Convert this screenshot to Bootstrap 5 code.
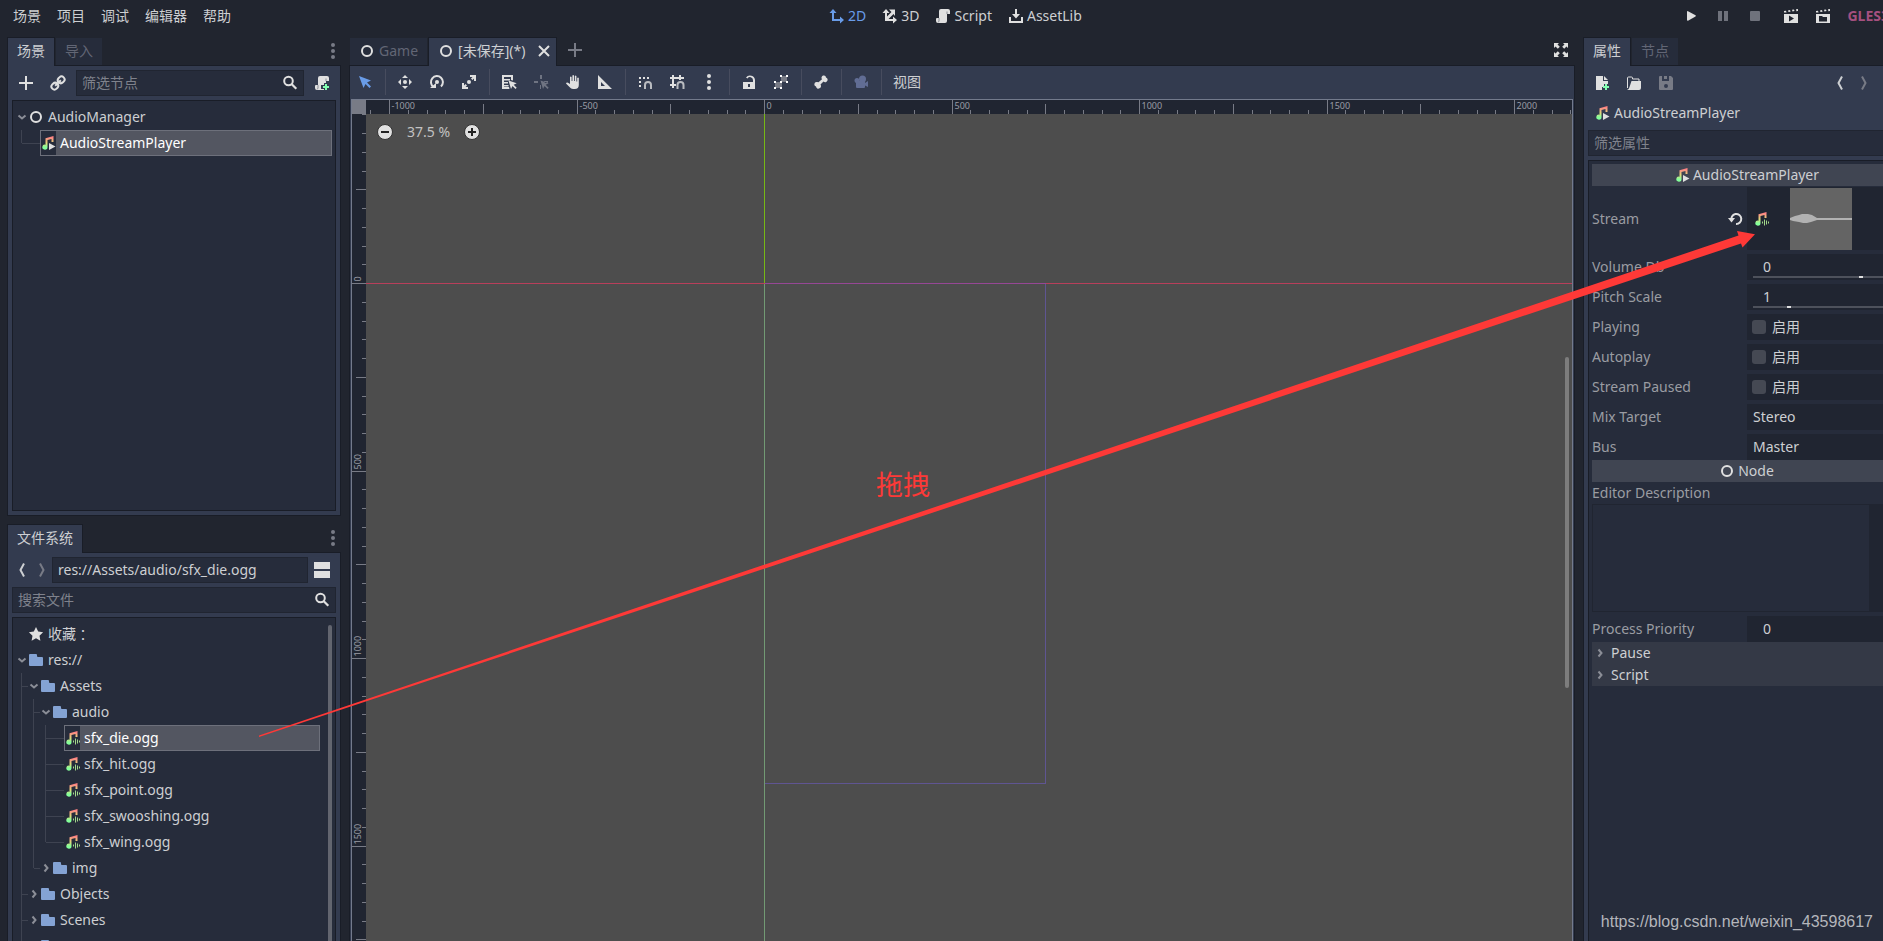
<!DOCTYPE html>
<html lang="zh-CN">
<head>
<meta charset="utf-8">
<meta name="viewport" content="width=device-width, initial-scale=1">
<title>AudioManager</title>
<link rel="stylesheet" href="https://cdn.jsdelivr.net/npm/bootstrap@5.3.0/dist/css/bootstrap.min.css">
<style>
:root{--base:#333b4f;--dark1:#262c3b;--dark2:#202531;--edge:#191d27;--txt:#cdcfd2;--dim:#9a9ca2;--icon:#e0e0e0;--accent:#699ce8}
html,body{height:100%;overflow:hidden}
body{background:#21252f;color:var(--txt);font:14px/20px "Noto Sans","Noto Sans CJK SC",sans-serif}
svg{display:block;flex:none}
button,input,select,textarea{font:inherit;color:inherit;border:0;background:none;padding:0;margin:0;border-radius:0;outline:0}
a{color:inherit;text-decoration:none}
ul{list-style:none;margin:0;padding:0}
/* the editor window reaches a little past the right and bottom of the page */
.editor{width:calc(100% + 36px);height:calc(100vh + 54px)}
.topbar{height:37px;padding:0 5px 5px}
.topbar button{height:32px;padding:0 8px}
.modes{position:absolute;left:821px;top:0}
.modes button{display:flex;align-items:center;gap:3px}
.runbar{padding-right:25px}
.runbar button{width:32px;padding:0;display:grid;place-items:center}
.renderer{color:#a5507f;font-weight:700}
.workspace{padding:0 7px;gap:8px;min-height:0}
.dock-left{width:334px;gap:8px}
.dock-right{width:329px}
.half{flex:0 0 50%;margin-bottom:0}
.tabs{height:28px}
.tab-item{height:29px;border:1px solid transparent;border-bottom:0;padding:0 9px 2px;color:#626675;background:var(--dark1);background-clip:padding-box;gap:4px;display:flex;align-items:center;white-space:nowrap;flex:none}
.tab-item:not(.on){height:28px}
.tab-item.on{background:var(--base);border-color:var(--edge);color:var(--txt);position:relative;z-index:1}
.tab-item.scene{min-width:79px}
.tab-item.closable{padding-right:5px}
.pane{background:var(--base);border:1px solid var(--edge);padding:4px;gap:4px;min-height:0}
.tool{width:28px;height:26px;display:grid;place-items:center;flex:none}
.tool.slim{width:20px}
.field{height:26px;background:var(--dark1);border:1px solid var(--dark2)}
.field input{flex:1;min-width:0;padding-left:5px}
.field svg{margin-right:5px}
input::placeholder{color:#7f828c;opacity:1}
.treebox{background:var(--dark1);border:1px solid var(--edge);padding:3px;min-height:0;overflow:hidden;position:relative}
.node{height:26px;display:flex;align-items:center}
.twist{width:13px;display:flex;align-items:center}
.node .pic{margin:0 4px 0 -1px}
.tree li{position:relative;padding-left:0}
.tree ul{padding-left:12px}
.tree ul>li::before{content:"";position:absolute;left:-7px;top:0;height:100%;border-left:1px solid #3e4351}
.tree ul>li:last-child::before{height:13px}
.tree ul>li::after{content:"";position:absolute;left:-6px;top:13px;width:6px;border-top:1px solid #3e4351}
.tree ul>li.leaf::after{width:18px}
.body{display:flex;align-items:center;flex:1;height:26px;border:1px solid transparent;margin-left:-1px}
.chosen .body{background:#535661;border-color:#6d707b;color:#fff}
.chosen .pic{background:var(--dark1);box-shadow:0 4px var(--dark1),0 -4px var(--dark1);clip-path:inset(-4px 0 -4px 1px)}
.wide-colon{font-family:"Noto Sans CJK TC",sans-serif}
.files{padding-right:15px}
.vbar{position:absolute;width:4px;border-radius:2px;background:#62656f}
.toolbar{height:33px;padding-left:1px}
.toolbar .tool{margin-right:4px;height:32px}
.toolbar .view-menu{height:32px;padding:0 6px}
.split{width:1px;height:26px;background:#474c5e;margin:3px 5px 0 2px}
.stage{margin:0 1px;border:1px solid #737a8c;border-bottom:0;display:grid;grid-template:14px 1fr/14px 1fr;min-height:0;overflow:hidden}
.corner{background:#787b86;margin:-1px 0 0 -1px}
.ruler{background:var(--dark2)}
.ruler text{font-size:9px;fill:#9a9ca5}
.ruler line{stroke:#787b86;shape-rendering:crispEdges}
.world{background:#4d4d4d;position:relative;overflow:hidden}
.zoombar{position:absolute;left:11px;top:8px;gap:14px;color:#c2c2c2}
.drag-note{position:absolute;left:510px;top:350px;font-size:27px;line-height:40px;color:#fe3937;font-family:"Noto Sans CJK SC",sans-serif}
.cat{height:22px;background:#404552;gap:3px;padding-right:2px}
.prop{display:flex;min-height:26px;margin-bottom:4px}
.prop>.name{flex:1;color:var(--dim);display:flex;align-items:center}
.prop>.val{width:156px;background:var(--dark2);position:relative;display:flex;align-items:center}
.prop.preview{height:64px;padding-top:1px}
.preview .val svg:first-child{margin:0 21px 0 6px}
.val .num{width:100%;padding:0 0 2px 16px;height:26px}
.val select{appearance:none;width:100%;padding-left:6px;height:26px}
.val input[type=range]{appearance:none;-webkit-appearance:none;position:absolute;left:6px;bottom:2px;width:142px;height:2px;background:#4d515b}
.val input[type=range]::-webkit-slider-thumb{-webkit-appearance:none;width:4px;height:2px;background:#e0e0e0}
.val input[type=checkbox]{appearance:none;width:14px;height:14px;border-radius:3px;background:#454953;margin:0 6px 0 5px}
.desc-name{height:22px;line-height:22px;color:var(--dim)}
.desc{height:108px;background:var(--dark2);border:1px solid var(--dark2)}
.desc textarea{background:var(--dark1);width:276px;resize:none}
.group{height:22px;background:#343946;width:100%;gap:5px;padding-left:2px}
.arrow{position:absolute;left:0;top:0;pointer-events:none;z-index:5}
.watermark{position:absolute;right:10px;bottom:8px;z-index:6;font:16px/22px "Liberation Sans",sans-serif;color:#b4b6bb}
</style>
</head>
<body>
<svg width="0" height="0" class="position-absolute" aria-hidden="true">
<defs>
<linearGradient id="mg" x1="0" y1="1" x2="0" y2="15" gradientUnits="userSpaceOnUse"><stop offset=".1" stop-color="#ff8484"/><stop offset=".5" stop-color="#e1d97a"/><stop offset=".8" stop-color="#84ff9a"/></linearGradient>
<symbol id="ring" viewBox="0 0 16 16"><circle cx="8" cy="8" r="5" fill="none" stroke="#e0e0e0" stroke-width="2"/></symbol>
<symbol id="note" viewBox="0 0 16 16"><path d="M5.500 3.200 13.500 1v6h-2V3.900l-4 1.100v7a2.600 2.500 0 1 1-2-2.300z" fill="url(#mg)"/></symbol>
<symbol id="player" viewBox="0 0 16 16"><use href="#note"/><path d="M9 8v7l6.500-3.500z" fill="#e0e0e0"/></symbol>
<symbol id="ogg" viewBox="0 0 16 16"><use href="#note"/><path d="M9.500 10.500v2M11.500 8.500v6M13.500 9.500v4M15.500 10.500v2" stroke="#a3d98a"/></symbol>
<symbol id="folder" viewBox="0 0 16 16"><path d="M2 2a1 1 0 0 0-1 1v10a1 1 0 0 0 1 1h12a1 1 0 0 0 1-1V6a1 1 0 0 0-1-1h-4a1 1 0 0 1-1-1V3a1 1 0 0 0-1-1z" fill="#84a3d4"/></symbol>
<symbol id="down" viewBox="0 0 12 12"><path d="m2.500 4.500 3.500 3 3.500-3" fill="none" stroke="#8b8e97" stroke-width="2"/></symbol>
<symbol id="right" viewBox="0 0 12 12"><path d="m4.500 2.500 3 3.500-3 3.500" fill="none" stroke="#8b8e97" stroke-width="2"/></symbol>
<symbol id="dots" viewBox="0 0 16 16"><circle cx="8" cy="2" r="2"/><circle cx="8" cy="8" r="2"/><circle cx="8" cy="14" r="2"/></symbol>
<symbol id="plus" viewBox="0 0 16 16"><path d="M7 1h2v6h6v2H9v6H7V9H1V7h6z"/></symbol>
<symbol id="search" viewBox="0 0 16 16"><circle cx="6.500" cy="6" r="4.300" fill="none" stroke="#e0e0e0" stroke-width="2"/><path d="m9.500 9 4.800 4.800" stroke="#e0e0e0" stroke-width="2.200"/></symbol>
<symbol id="script" viewBox="0 0 16 16"><path d="M6 1a2 2 0 0 0-2 2v7H2a1 1 0 0 0-1 1v2a2 2 0 0 0 2 2h7a2 2 0 0 0 2-2V6h3V3a2 2 0 0 0-2-2z"/><path d="M4 10v3a1 1 0 0 1-1 1M12 3.500V6" stroke="#8b8e97" fill="none"/></symbol>
<symbol id="back" viewBox="0 0 16 16"><path d="M10 1.500 6.500 8l3.500 6.500" fill="none" stroke="currentColor" stroke-width="2"/></symbol>
<symbol id="fwd" viewBox="0 0 16 16"><path d="M6 1.500 9.500 8 6 14.500" fill="none" stroke="currentColor" stroke-width="2"/></symbol>
<symbol id="expand" viewBox="0 0 16 16"><path d="M1 1h5L4.500 2.500l2.300 2.300-2 2-2.300-2.300L1 6zM15 1v5l-1.500-1.500-2.300 2.300-2-2 2.300-2.300L10 1zM1 15v-5l1.500 1.500 2.300-2.300 2 2-2.300 2.300L6 15zM15 15h-5l1.500-1.500-2.300-2.300 2-2 2.300 2.300L15 10z"/></symbol>
</defs>
</svg>

<div class="editor d-flex flex-column">
<header class="topbar d-flex align-items-center justify-content-between">
  <nav class="d-flex" aria-label="菜单"><button>场景</button><button>项目</button><button>调试</button><button>编辑器</button><button>帮助</button></nav>
  <div class="modes d-flex">
    <button style="color:var(--accent)"><svg width="16" height="16" fill="#699ce8"><path d="m4 1-3.500 4H3v8h8v2.500l4-3.500-4-3.500V11H5V5h2.500z"/></svg>2D</button>
    <button><svg width="16" height="16" fill="#e0e0e0"><path d="M4 1 .5 5H3v8h8v2.500l4-3.500-4-3.500V11H6.500l5-5L13 8V1.500H7L9.500 4 5 8.500V5h2.500z"/></svg>3D</button>
    <button><svg width="16" height="16" fill="#e0e0e0"><use href="#script"/></svg>Script</button>
    <button><svg width="16" height="16" fill="#e0e0e0"><path d="M7 1h2v5h3l-4 4.500L4 6h3zM1 9h2v4h10V9h2v6H1z"/></svg>AssetLib</button>
  </div>
  <div class="runbar d-flex align-items-center">
    <button aria-label="运行"><svg width="16" height="16" fill="#e0e0e0"><path d="M4 3.800q0-1 1-.6l7.500 4q.8.600 0 1.200l-7.500 4.400q-1 .2-1-.8z"/></svg></button>
    <button aria-label="暂停"><svg width="16" height="16" fill="#6f727c"><path d="M3 3h4v10H3zM9 3h4v10H9z"/></svg></button>
    <button aria-label="停止"><svg width="16" height="16" fill="#6f727c"><rect x="3" y="3" width="10" height="10" rx="1"/></svg></button>
    <button class="ms-1" aria-label="运行场景"><svg width="16" height="16" fill="#e0e0e0"><path d="m1 3 2-.3.5 1.800H1zM5 2.400l2-.3.5 1.600-2 .3zM9 1.800l2-.3.5 1.600-2 .3zM13 1.200l2-.2v2l-1.600.3zM1 6h14v9H1zm5 1.500v6L11 10.500z" fill-rule="evenodd"/></svg></button>
    <button aria-label="运行指定场景"><svg width="16" height="16" fill="#e0e0e0"><path d="m1 3 2-.3.5 1.800H1zM5 2.400l2-.3.5 1.600-2 .3zM9 1.800l2-.3.5 1.600-2 .3zM13 1.200l2-.2v2l-1.600.3zM1 6h14v9H1zm3 2v5.500h8V9H8L7 8z" fill-rule="evenodd"/></svg></button>
    <span class="renderer ps-2">GLES3</span>
  </div>
</header>

<main class="workspace d-flex flex-grow-1">
<aside class="dock-left d-flex flex-column flex-shrink-0">
  <section class="half d-flex flex-column">
    <div class="tabs d-flex"><button class="tab-item on">场景</button><button class="tab-item">导入</button>
      <button class="ms-auto" aria-label="选项"><svg width="16" height="16" fill="#787b86"><use href="#dots"/></svg></button></div>
    <div class="pane d-flex flex-column flex-grow-1">
      <div class="d-flex gap-1">
        <button class="tool" aria-label="添加"><svg width="16" height="16" fill="#e0e0e0"><use href="#plus"/></svg></button>
        <button class="tool" aria-label="实例"><svg width="16" height="16" fill="none" stroke="#e0e0e0" stroke-width="2"><g transform="rotate(-45 8 8)"><rect x="0" y="5" width="7" height="6" rx="3"/><rect x="9" y="5" width="7" height="6" rx="3"/><path d="M4 8h8"/></g></svg></button>
        <label class="field d-flex align-items-center flex-grow-1"><input type="text" placeholder="筛选节点"><svg width="16" height="16"><use href="#search"/></svg></label>
        <button class="tool" aria-label="附加脚本"><svg width="16" height="16" fill="#e0e0e0"><use href="#script"/><path d="M10 8h3v2h3v4h-3v2h-3v-2H7v-4h3z" fill="#333b4f"/><path d="M11 9h2v2h2v2h-2v2h-2v-2H9v-2h2z" fill="#84ffb1"/></svg></button>
      </div>
      <div class="treebox flex-grow-1"><ul class="tree">
        <li><div class="node"><span class="twist"><svg width="12" height="12"><use href="#down"/></svg></span><span class="body"><svg class="pic" width="16" height="16"><use href="#ring"/></svg>AudioManager</span></div>
          <ul><li class="leaf"><div class="node chosen"><span class="twist"></span><span class="body"><svg class="pic" width="16" height="16"><use href="#player"/></svg>AudioStreamPlayer</span></div></li></ul></li>
      </ul></div>
    </div>
  </section>
  <section class="d-flex flex-column flex-grow-1" style="min-height:0">
    <div class="tabs d-flex"><button class="tab-item on">文件系统</button>
      <button class="ms-auto" aria-label="选项"><svg width="16" height="16" fill="#787b86"><use href="#dots"/></svg></button></div>
    <div class="pane d-flex flex-column flex-grow-1">
      <div class="d-flex">
        <button class="tool slim" aria-label="后退"><svg width="16" height="16"><use href="#back"/></svg></button>
        <button class="tool slim" aria-label="前进" style="color:#787b86"><svg width="16" height="16"><use href="#fwd"/></svg></button>
        <label class="field d-flex align-items-center flex-grow-1"><input type="text" value="res://Assets/audio/sfx_die.ogg" aria-label="路径"></label>
        <button class="tool" aria-label="拆分"><svg width="16" height="16" fill="#e0e0e0"><path d="M0 0h16v7H0zM0 9h16v7H0z"/></svg></button>
      </div>
      <label class="field d-flex align-items-center"><input type="text" placeholder="搜索文件"><svg width="16" height="16"><use href="#search"/></svg></label>
      <div class="treebox files flex-grow-1"><ul class="tree" id="files"></ul><div class="vbar" style="right:3px;top:7px;bottom:0"></div></div>
    </div>
  </section>
</aside>

<section class="d-flex flex-column flex-grow-1" style="min-width:0">
  <div class="tabs d-flex align-items-start">
    <button class="tab-item scene"><svg width="16" height="16"><use href="#ring"/></svg>Game</button>
    <div class="tab-item on closable"><svg width="16" height="16"><use href="#ring"/></svg><span>[未保存](*)</span><button class="ms-1 ps-1" aria-label="关闭"><svg width="14" height="16" stroke="#e0e0e0" stroke-width="2"><path d="m2 3 10 10M12 3 2 13"/></svg></button></div>
    <button class="tool ms-1" aria-label="新建场景"><svg width="16" height="16" fill="#787b86"><use href="#plus"/></svg></button>
    <button class="tool ms-auto" aria-label="全屏"><svg width="16" height="16" fill="#e0e0e0"><use href="#expand"/></svg></button>
  </div>
  <div class="pane p-0 gap-0 d-flex flex-column flex-grow-1">
    <div class="toolbar d-flex align-items-start">
      <button class="tool" aria-label="选择"><svg width="16" height="16" fill="#699ce8"><path d="M2 2l4.500 12 2-4 4 4 1.500-1.500-4-4 4-2z"/></svg></button><i class="split"></i>
      <button class="tool" aria-label="移动"><svg width="16" height="16" fill="#e0e0e0"><path d="m8 1 3 3H5zM8 15l3-3H5zM1 8l3-3v6zM15 8l-3-3v6z"/><circle cx="8" cy="8" r="2"/></svg></button>
      <button class="tool" aria-label="旋转"><svg width="16" height="16" fill="#e0e0e0"><path d="M4.500 13A6 6 0 1 1 12 12.500" fill="none" stroke="#e0e0e0" stroke-width="2"/><path d="M1 14h6V9z"/><circle cx="8" cy="8" r="2"/></svg></button>
      <button class="tool" aria-label="缩放"><svg width="16" height="16" fill="#e0e0e0"><path d="M9 1h6v6h-2V4.500L11.500 6 10 4.500 11.500 3H9zM1 9h2v2.500L4.500 10 6 11.500 4.500 13H7v2H1z"/><circle cx="8" cy="8" r="2"/></svg></button><i class="split"></i>
      <button class="tool" aria-label="列表选择"><svg width="16" height="16" fill="#e0e0e0"><path d="M1 1h11v5.500L10 6V3H3v2h6v1.500H3V8h4v1.500H3V11h4.500v1.500H3v.5h5l.5 2H1z"/><path d="m7.500 6.500 2.500 8.500 1.500-3 3 3 1.200-1.200-3-3 3-1.500z"/></svg></button>
      <button class="tool" aria-label="轴心"><svg width="16" height="16" fill="#6f7482"><path d="M7 1h2v4H7zM1 7h4v2H1zM11 7h4v2h-3zM7 11h1v4H7zM7.500 6.500l2.500 8.500 1.500-3 3 3 1.200-1.200-3-3 3-1.500z"/></svg></button>
      <button class="tool" aria-label="平移"><svg width="16" height="16" fill="#e0e0e0"><path d="M5 3q.8-1 1.600 0v4h.8V1.500q.8-1 1.600 0V7h.8V2q.8-1 1.600 0v5.500h.8V4q.8-1 1.600 0v7q0 4-4 4H8q-2 0-3.500-2L1 9.500q.5-1.500 2-.7l2 1.200z"/></svg></button>
      <button class="tool" aria-label="标尺"><svg width="16" height="16" fill="#e0e0e0"><path d="M1 1v14h14zm3 7 4 4H4z" fill-rule="evenodd"/></svg></button><i class="split"></i>
      <button class="tool" aria-label="智能吸附"><svg width="16" height="16" fill="#e0e0e0"><path d="M2 3h2v2H2zM2 7h2v2H2zM2 11h2v2H2zM6 3h2v2H6zM10 3h2v2h-2z"/><path d="M8 15v-4a3 3 0 0 1 6 0v4" fill="none" stroke="#b9bbc0" stroke-width="2"/></svg></button>
      <button class="tool" aria-label="网格吸附"><svg width="16" height="16" fill="#e0e0e0"><path d="M3 1h2v13H3zM10 1h2v5h-2zM1 3h14v2H1zM1 10h6v2H1z"/><path d="M8.500 15v-4a3 3 0 0 1 6 0v4" fill="none" stroke="#b9bbc0" stroke-width="2"/></svg></button>
      <button class="tool" aria-label="吸附选项"><svg width="16" height="16" fill="#e0e0e0"><use href="#dots"/></svg></button><i class="split"></i>
      <button class="tool" aria-label="锁定"><svg width="16" height="16" fill="#e0e0e0"><path d="M2 8h10V6a3 3 0 0 0-5.500-1.500L5 3.500A5 5 0 0 1 14 6v9H2zm5 2v3h2v-3z" fill-rule="evenodd"/></svg></button>
      <button class="tool" aria-label="分组"><svg width="16" height="16" fill="#fff"><path d="M8 2h6v6H8zM2 8h7v6H2z" fill="#787b86"/><path d="M7 1h2v2H7zM13 1h2v2h-2zM13 7h2v2h-2zM1 7h2v2H1zM7 7h2v2H7zM1 13h2v2H1zM7 13h2v2H7z"/></svg></button><i class="split"></i>
      <button class="tool" aria-label="骨骼"><svg width="16" height="16" fill="#e0e0e0"><path d="M10 1.500a2.300 2.300 0 0 1 3 2 2.300 2.300 0 0 1 .5 4.200 2.300 2.300 0 0 1-3-.2L7.500 10.500a2.500 2.500 0 0 1-1 3.800 2.300 2.300 0 0 1-3.500-1.800 2.300 2.300 0 0 1 .5-4.500 2.500 2.500 0 0 1 2 .3L9 5.300a2.500 2.500 0 0 1 1-3.800z"/></svg></button><i class="split"></i>
      <button class="tool" aria-label="摄像机"><svg width="16" height="16" fill="#616d94"><circle cx="9.500" cy="5" r="3.500"/><circle cx="4" cy="6.500" r="2.500"/><path d="M3 7h9v2l3-2v6l-3-1.500V13q0 1-1 1H4q-1 0-1-1z"/></svg></button><i class="split"></i>
      <button class="view-menu">视图</button>
    </div>
    <div class="stage flex-grow-1">
      <div class="corner"></div>
      <svg class="ruler" id="rulerX" width="100%" height="14"></svg>
      <svg class="ruler" id="rulerY" width="14" height="100%"></svg>
      <div class="world">
        <svg class="position-absolute top-0 start-0" width="100%" height="100%" shape-rendering="crispEdges">
          <path d="M398.500 0v169" stroke="#76b814"/><path d="M398.500 170v900" stroke="#729a74"/>
          <line x1="0" x2="100%" y1="169.500" y2="169.500" stroke="#b83f5b"/>
          <path d="M399 169.500h281" stroke="#964795"/><path d="M679.500 170v500M399 669.500h281" stroke="#5f5592"/>
        </svg>
        <div class="zoombar d-flex align-items-center">
          <button aria-label="缩小"><svg width="16" height="16"><circle cx="8" cy="8" r="7.500" fill="#e0e0e0" stroke="#333"/><path d="M4 7h8v2H4z" fill="#222"/></svg></button>
          <span>37.5 %</span>
          <button aria-label="放大"><svg width="16" height="16"><circle cx="8" cy="8" r="7.500" fill="#e0e0e0" stroke="#333"/><path d="M4 7h3V4h2v3h3v2H9v3H7V9H4z" fill="#222"/></svg></button>
        </div>
        <div class="drag-note">拖拽</div>
        <div class="vbar" style="right:3px;top:243px;height:331px;background:#7d7d7d"></div>
      </div>
    </div>
  </div>
</section>

<aside class="dock-right d-flex flex-column flex-shrink-0">
  <div class="tabs d-flex"><button class="tab-item on">属性</button><button class="tab-item">节点</button></div>
  <div class="pane d-flex flex-column flex-grow-1">
    <div class="d-flex gap-1">
      <button class="tool" aria-label="新建资源"><svg width="16" height="16" fill="#e0e0e0"><path d="M2 1h7v5h5v3h-4v3H8v3H2z"/><path d="M10 1l4 4h-4z"/><path d="M11 9h2v2h2v2h-2v2h-2v-2H9v-2h2z" fill="#84ffb1"/></svg></button>
      <button class="tool" aria-label="打开"><svg width="16" height="16" fill="#e0e0e0"><path d="M1.500 13V3q0-1 1-1h3q1 0 1 1v1H13v2" fill="none" stroke="#e0e0e0"/><path d="M5.500 6H15v7q0 2-2 2H1q2-.5 2.500-3z"/></svg></button>
      <button class="tool" aria-label="保存"><svg width="16" height="16" fill="#787b86"><path d="M2 1h2v5h7V1h2l2 2v11q0 1-1 1H2q-1 0-1-1V2q0-1 1-1zm4 0h3v3H6zm2 8a2 2 0 1 0 0 4 2 2 0 0 0 0-4z" fill-rule="evenodd"/></svg></button>
      <button class="tool slim ms-auto" aria-label="后退"><svg width="16" height="16"><use href="#back"/></svg></button>
      <button class="tool slim" aria-label="前进" style="color:#787b86;margin-right:33px"><svg width="16" height="16"><use href="#fwd"/></svg></button>
    </div>
    <div class="d-flex align-items-center" style="height:26px;gap:4px;padding-left:6px"><svg width="16" height="16"><use href="#player"/></svg>AudioStreamPlayer</div>
    <label class="field d-flex align-items-center"><input type="text" placeholder="筛选属性"></label>
    <div class="treebox flex-grow-1">
      <div class="cat d-flex align-items-center justify-content-center"><svg width="16" height="16"><use href="#player"/></svg>AudioStreamPlayer</div>
      <div class="prop preview"><span class="name">Stream<svg class="ms-auto me-1" width="16" height="16"><path d="M4.500 9.500A5 5 0 1 1 9 13" fill="none" stroke="#e0e0e0" stroke-width="2"/><path d="M1 7h7l-3.500 4.500z" fill="#e0e0e0"/></svg></span>
        <span class="val"><svg width="16" height="16"><use href="#ogg"/></svg><svg width="62" height="62"><path fill="#646464" d="M0 0h62v62H0z"/><path d="M0 30l5-2 4-1 3-1h6l4 1 5 3h35v2H27l-6 2-4 1h-4l-4-1-6-1-3-1z" fill="#b2b2b2"/></svg></span></div>
      <div class="prop"><label class="name" for="vol">Volume Db</label><span class="val"><input class="num" id="vol" value="0"><input type="range" min="-80" max="24" value="0" aria-label="Volume Db"></span></div>
      <div class="prop"><label class="name" for="pitch">Pitch Scale</label><span class="val"><input class="num" id="pitch" value="1"><input type="range" min="0.01" max="4" step="0.01" value="1" aria-label="Pitch Scale"></span></div>
      <div class="prop"><span class="name">Playing</span><label class="val"><input type="checkbox">启用</label></div>
      <div class="prop"><span class="name">Autoplay</span><label class="val"><input type="checkbox">启用</label></div>
      <div class="prop"><span class="name">Stream Paused</span><label class="val"><input type="checkbox">启用</label></div>
      <div class="prop"><label class="name" for="mix">Mix Target</label><span class="val"><select id="mix"><option>Stereo</option></select></span></div>
      <div class="prop mb-0"><label class="name" for="bus">Bus</label><span class="val"><select id="bus"><option>Master</option></select></span></div>
      <div class="cat d-flex align-items-center justify-content-center"><svg width="16" height="16"><use href="#ring"/></svg>Node</div>
      <label for="desc" class="desc-name d-block">Editor Description</label>
      <div class="desc d-flex align-items-center mb-1"><textarea id="desc" class="h-100"></textarea><svg class="ms-auto me-1" width="16" height="16" fill="#e0e0e0"><use href="#expand"/></svg></div>
      <div class="prop mb-0"><label class="name" for="prio">Process Priority</label><span class="val"><input class="num" id="prio" value="0"></span></div>
      <button class="group d-flex align-items-center"><svg width="12" height="12"><use href="#right"/></svg>Pause</button>
      <button class="group d-flex align-items-center"><svg width="12" height="12"><use href="#right"/></svg>Script</button>
    </div>
  </div>
</aside>
</main>
</div>

<svg class="arrow" width="1883" height="941" viewBox="0 0 1883 941"><path d="M259 735.500 1738.500 235.500l-1.500-4.500 18 3.200-12.500 13.300-1.500-4L259 737z" fill="#fe3937"/></svg>
<a class="watermark" href="#">https://blog.csdn.net/weixin_43598617</a>

<script src="https://cdn.jsdelivr.net/npm/bootstrap@5.3.0/dist/js/bootstrap.bundle.min.js"></script>
<script>
// file tree
const files = [
  {t:'收藏<span class="wide-colon">：</span>', icon:'star'},
  {t:'res://', kids:[
    {t:'Assets', kids:[
      {t:'audio', kids:['sfx_die.ogg','sfx_hit.ogg','sfx_point.ogg','sfx_swooshing.ogg','sfx_wing.ogg'].map((t,i)=>({t, icon:'ogg', on:i===0}))},
      {t:'img', shut:true}]},
    {t:'Objects', shut:true}, {t:'Scenes', shut:true}, {t:'', shut:true}]}
];
const star = '<svg class="pic" width="16" height="16"><path d="m8 1 2.200 4.600 4.900.6-3.600 3.500.9 5L8 12.300 3.600 14.700l.9-5L.9 6.200l4.900-.6z" fill="#e0e0e0"/></svg>';
const item = n => {
  const twist = n.icon ? '' : `<svg width="12" height="12"><use href="#${n.shut ? 'right' : 'down'}"/></svg>`;
  const pic = n.icon === 'star' ? star : `<svg class="pic" width="16" height="16"><use href="#${n.icon || 'folder'}"/></svg>`;
  return `<li class="${n.icon ? 'leaf' : ''}"><div class="node ${n.on ? 'chosen' : ''}"><span class="twist">${twist}</span><span class="body">${pic}${n.t}</span></div>${n.kids ? '<ul>' + n.kids.map(item).join('') + '</ul>' : ''}</li>`;
};
document.getElementById('files').innerHTML = files.map(item).join('');

// rulers: a tick every 50 units, a label every 500, at 37.5 % zoom
const ruler = (id, origin, vertical) => {
  const el = document.getElementById(id);
  const box = el.getBoundingClientRect();
  const length = vertical ? Math.min(box.height, innerHeight - box.top) : box.width;
  let out = '';
  for (let u = -1050; origin + u * 0.375 < length; u += 50) {
    const p = Math.round(origin + u * 0.375) + 0.5;
    if (p < 0) continue;
    const from = u % 500 === 0 ? 0 : u % 250 === 0 ? 4 : 10;
    out += vertical ? `<line x1="${from}" x2="14" y1="${p}" y2="${p}"/>` : `<line y1="${from}" y2="14" x1="${p}" x2="${p}"/>`;
    if (u % 500 === 0) out += vertical ? `<text transform="translate(9 ${p - 2}) rotate(-90)">${u}</text>` : `<text x="${p + 2}" y="9">${u}</text>`;
  }
  el.innerHTML = out;
};
ruler('rulerX', 398, false);
ruler('rulerY', 169, true);
</script>
</body>
</html>
